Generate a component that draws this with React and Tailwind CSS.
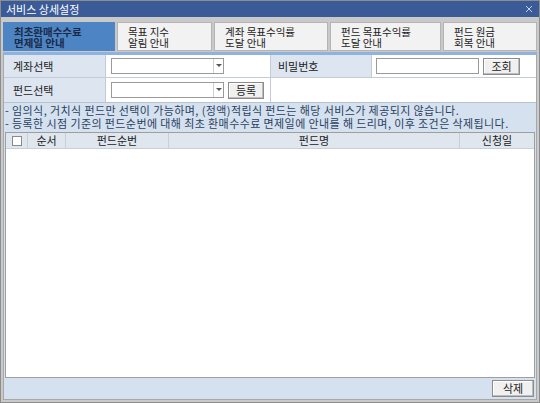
import React from "react";

const font = { fontFamily: '"Noto Sans CJK KR", "Noto Sans", sans-serif' };

function Tab({ lines, active }) {
  return (
    <div
      className={
        "flex flex-col justify-center h-[29px] px-[10px] text-[10.5px] leading-[11px] border " +
        (active
          ? "bg-[#4c84c4] border-[#4c84c4] text-[#1b2a44] font-bold"
          : "bg-[#f2f2f2] border-[#b4b4b4] text-[#222]")
      }
    >
      {lines.map((l, i) => (
        <span key={i} className="whitespace-nowrap">{l}</span>
      ))}
    </div>
  );
}

function Combo({ w }) {
  return (
    <div className={"flex h-[16px] bg-white border border-[#9a9a9a] " + w}>
      <div className="flex-1" />
      <div className="w-[10px] border-l border-[#cfcfcf] flex items-center justify-center">
        <svg width="6" height="4" viewBox="0 0 6 4">
          <path d="M0 0h6L3 3z" fill="#555" />
        </svg>
      </div>
    </div>
  );
}

function Btn({ children, w }) {
  return (
    <div
      className={
        "h-[17px] flex items-center justify-center text-[11px] text-[#222] bg-[#f0f0f0] border border-[#8c8c8c] shadow-[inset_-1px_-1px_0_#bdbdbd,inset_1px_1px_0_#fff] " +
        w
      }
    >
      {children}
    </div>
  );
}

export default function App() {
  return (
    <div
      style={font}
      className="w-[540px] h-[403px] flex flex-col bg-[#c9c9c9] border border-[#8d8d8d] overflow-hidden"
    >
      {/* title bar */}
      <div className="h-[16px] shrink-0 bg-[#3b5b98] flex items-center justify-between pl-[5px] pr-[6px]">
        <span className="text-[11px] text-white leading-none">서비스 상세설정</span>
        <svg width="8" height="8" viewBox="0 0 8 8">
          <path d="M1 1l6 6M7 1l-6 6" stroke="#c8d4ea" strokeWidth="1" />
        </svg>
      </div>

      <div className="flex-1 flex flex-col px-[2px] pb-[2px]">
        {/* tabs */}
        <div className="flex gap-[2px] pt-[5px] shrink-0">
          <div className="w-[112px]"><Tab active lines={["최초환매수수료", "면제일 안내"]} /></div>
          <div className="w-[95px]"><Tab lines={["목표 지수", "알림 안내"]} /></div>
          <div className="w-[114px]"><Tab lines={["계좌 목표수익률", "도달 안내"]} /></div>
          <div className="w-[111px]"><Tab lines={["펀드 목표수익률", "도달 안내"]} /></div>
          <div className="flex-1"><Tab lines={["펀드 원금", "회복 안내"]} /></div>
        </div>
        <div className="h-[3px] mt-[1px] bg-[#8fb2de] shrink-0" />

        {/* content panel */}
        <div className="flex-1 flex flex-col bg-[#d5e1ef] border border-[#a8a8a8] border-t-0">
          {/* form */}
          <div className="flex flex-col bg-white border-b border-[#b8c3d0]">
            <div className="flex h-[23px] border-b border-[#c3ccd6]">
              <div className="w-[102px] bg-[#dce5f0] flex items-center pl-[9px] text-[11px] text-[#222] border-r border-[#c3ccd6]">계좌선택</div>
              <div className="w-[164px] flex items-center pl-[5px]">
                <Combo w="w-[113px]" />
              </div>
              <div className="w-[102px] bg-[#dce5f0] flex items-center pl-[7px] text-[11px] text-[#222] border-l border-r border-[#c3ccd6]">비밀번호</div>
              <div className="flex-1 flex items-center pl-[4px] gap-[4px]">
                <div className="w-[103px] h-[16px] bg-white border border-[#9a9a9a]" />
                <Btn w="w-[37px]">조회</Btn>
              </div>
            </div>
            <div className="flex h-[24px]">
              <div className="w-[102px] bg-[#dce5f0] flex items-center pl-[9px] text-[11px] text-[#222] border-r border-[#c3ccd6]">펀드선택</div>
              <div className="w-[164px] flex items-center pl-[5px] gap-[4px]">
                <Combo w="w-[113px]" />
                <Btn w="w-[36px]">등록</Btn>
              </div>
              <div className="flex-1 border-l border-[#c3ccd6]" />
            </div>
          </div>

          {/* notes */}
          <div className="flex flex-col px-[1px] pt-[1px] pb-[2px] text-[11px] leading-[13px] tracking-[0.4px] text-[#2a3f5e]">
            <span className="whitespace-nowrap">- 임의식, 거치식 펀드만 선택이 가능하며, (정액)적립식 펀드는 해당 서비스가 제공되지 않습니다.</span>
            <span className="whitespace-nowrap">- 등록한 시점 기준의 펀드순번에 대해 최초 환매수수료 면제일에 안내를 해 드리며, 이후 조건은 삭제됩니다.</span>
          </div>

          {/* grid */}
          <div className="flex-1 mx-[1px] flex flex-col bg-white border border-[#9e9e9e]">
            <div className="flex h-[16px] bg-[#dfe6ee] border-b border-[#c7cfd8] text-[11px] text-[#222]">
              <div className="w-[22px] flex items-center justify-center border-r border-[#c7cfd8]">
                <div className="w-[10px] h-[10px] bg-white border border-[#8a8a8a]" />
              </div>
              <div className="w-[38px] flex items-center justify-center border-r border-[#c7cfd8]">순서</div>
              <div className="w-[103px] flex items-center justify-center border-r border-[#c7cfd8]">펀드순번</div>
              <div className="w-[291px] flex items-center justify-center border-r border-[#c7cfd8]">펀드명</div>
              <div className="flex-1 flex items-center justify-center">신청일</div>
            </div>
            <div className="flex-1" />
          </div>

          {/* footer */}
          <div className="h-[21px] flex items-center justify-end pr-[2px]">
            <Btn w="w-[42px]">삭제</Btn>
          </div>
        </div>
      </div>
    </div>
  );
}
